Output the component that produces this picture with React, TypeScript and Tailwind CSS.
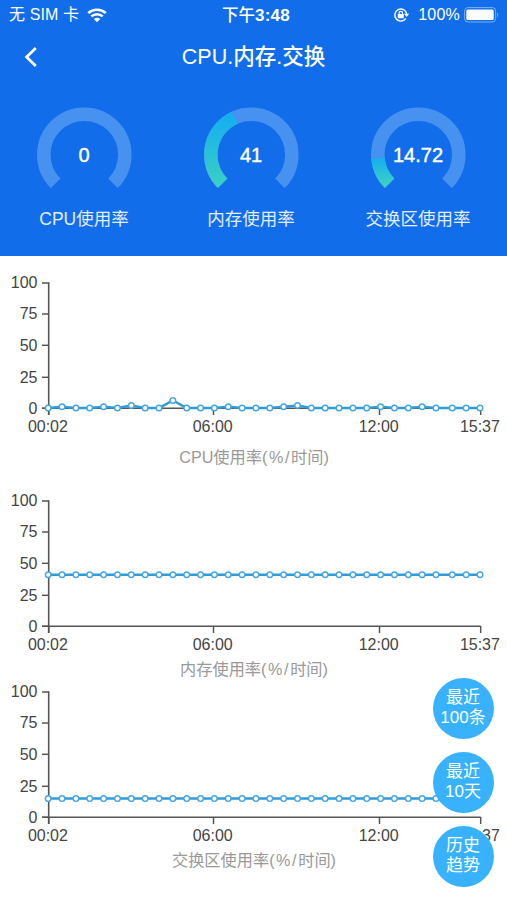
import { ReactNode } from 'react';

type GaugeProps = {
  id: string;
  label: string;
  value: number;
};

type ChartProps = {
  name: string;
  values: number[];
  captionY: number;
  height: number;
};

const POINT_COUNT = 32;

const cpuPeaks: Record<number, number> = { 1: 1, 4: 1, 6: 2, 9: 6, 13: 1, 17: 1, 18: 2, 24: 1, 27: 1 };
const cpuValues = Array.from({ length: POINT_COUNT }, (_, i) => cpuPeaks[i] ?? 0);
const memoryValues = Array.from({ length: POINT_COUNT }, () => 41);
const swapValues = Array.from({ length: POINT_COUNT }, () => 14.72);

const gauges: GaugeProps[] = [
  { id: 'cpu', label: 'CPU使用率', value: 0 },
  { id: 'memory', label: '内存使用率', value: 41 },
  { id: 'swap', label: '交换区使用率', value: 14.72 },
];

const yTicks = [
  { label: '100', y: 10 },
  { label: '75', y: 41 },
  { label: '50', y: 72.3 },
  { label: '25', y: 104.3 },
  { label: '0', y: 135.3 },
];

const xTicks = [
  { label: '00:02', x: 48.7 },
  { label: '06:00', x: 213.5 },
  { label: '12:00', x: 379.5 },
  { label: '15:37', x: 480.7 },
];

const actions = [
  ['最近', '100条'],
  ['最近', '10天'],
  ['历史', '趋势'],
];

// the last three samples come after a short gap
const pointX = (i: number) => (i < 29 ? 48.2 + i * 13.85 : 452.3 + (i - 29) * 13.85);
const pointY = (value: number) => 135 - value * 1.25;

const arcPoint = (ratio: number) => {
  const angle = ((135 + 270 * ratio) * Math.PI) / 180;
  return { x: 48.3 + 40.5 * Math.cos(angle), y: 47.7 + 40.5 * Math.sin(angle) };
};

const arcPath = (ratio: number) => {
  const start = arcPoint(0);
  const end = arcPoint(ratio);
  return `M${start.x} ${start.y}A40.5 40.5 0 ${ratio * 270 > 180 ? 1 : 0} 1 ${end.x} ${end.y}`;
};

const StatusBar = () => (
  <div className="grid h-[30px] grid-cols-[1fr_auto_1fr] items-center pr-[7px] pl-[9px] text-[16px] leading-none">
    <div className="flex items-center">
      <span className="tracking-[0.1px]">无 SIM 卡</span>
      <svg className="ml-[8px]" width="20" height="15" viewBox="0 0 20 15" fill="none">
        <path d="M1.2 5.1C6.1.6 13.9.6 18.8 5.1" stroke="white" strokeWidth="2.6" />
        <path d="M4.3 8.4C7.5 5.4 12.5 5.4 15.7 8.4" stroke="white" strokeWidth="2.5" />
        <path d="M6.8 11C8.6 9.3 11.4 9.3 13.2 11L10 14.3Z" fill="white" />
      </svg>
    </div>
    <span className="ml-[3px] text-[16.5px] font-medium">
      下午<span className="text-[17px] font-bold tracking-[0.3px]">3:48</span>
    </span>
    <div className="flex items-center justify-end">
      <svg width="17" height="16" viewBox="0 0 17 16" fill="none">
        <path d="M12.8 11.4A6 6 0 1 1 13.7 7" stroke="white" strokeWidth="1.4" />
        <path d="M11 6.8H16.2L13.6 10Z" fill="white" />
        <rect x="4.8" y="7" width="6" height="4.3" rx="0.6" fill="white" />
        <path d="M6.1 7.2V6A1.7 1.7 0 0 1 9.5 6V7.2" stroke="white" strokeWidth="1.2" />
      </svg>
      <span className="ml-[8px] tracking-[0.2px]">100%</span>
      <svg className="ml-[4px]" width="36" height="16" viewBox="0 0 36 16" fill="none">
        <rect x="0.6" y="0.6" width="31" height="14.4" rx="3.4" stroke="white" strokeOpacity="0.45" />
        <rect x="2.3" y="2.5" width="27.4" height="10.6" rx="1.6" fill="white" />
        <path d="M33.2 5.2Q35.2 7.8 33.2 10.4Z" fill="white" fillOpacity="0.5" />
      </svg>
    </div>
  </div>
);

const TitleBar = () => (
  <div className="grid h-[54px] grid-cols-[60px_1fr_60px] items-center">
    <button className="pl-[24px]" aria-label="返回">
      <svg width="14" height="20" viewBox="0 0 14 20" fill="none">
        <path d="M11.8 1L2.6 10L11.8 19" stroke="white" strokeWidth="2.8" />
      </svg>
    </button>
    <h1 className="pt-[2px] text-center text-[21.5px] leading-none font-medium">CPU.内存.交换</h1>
  </div>
);

const Gauge = ({ id, label, value }: GaugeProps) => (
  <div className="flex w-[167px] flex-col items-center">
    <svg width="96" height="96" viewBox="0 0 96 96" fill="none">
      <defs>
        <linearGradient id={`gauge-${id}`} x1="0" y1="0" x2="0" y2="1">
          <stop offset="0" stopColor="#16afef" />
          <stop offset="1" stopColor="#38cfc5" />
        </linearGradient>
      </defs>
      <path d={arcPath(1)} stroke="#4791f1" strokeWidth="13.5" />
      {value > 0 && (
        <path d={arcPath(value / 100)} stroke={`url(#gauge-${id})`} strokeWidth="13.5" />
      )}
      <text x="48" y="54.6" textAnchor="middle" fontSize="20" fill="white" stroke="white" strokeWidth="0.4">
        {value}
      </text>
    </svg>
    <span className="mt-[6px] text-[17.5px] leading-[20px] text-[#e3eefd]">{label}</span>
  </div>
);

const LineChart = ({ name, values, captionY, height }: ChartProps) => (
  <svg className="block" width="507" height={height} viewBox={`0 0 507 ${height}`}>
    <path d="M48.7 9.3V142M42 135.3H480.7" stroke="#555" strokeWidth="1.6" fill="none" />
    {yTicks.map(({ label, y }) => (
      <g key={label}>
        <path d={`M42 ${y}H48.7`} stroke="#555" strokeWidth="1.5" />
        <text x="37.5" y={y + 5.2} textAnchor="end" fontSize="16" fill="#444">
          {label}
        </text>
      </g>
    ))}
    {xTicks.map(({ label, x }) => (
      <g key={label}>
        <path d={`M${x} 135V142`} stroke="#555" strokeWidth="1.5" />
        <text x={x - 0.8} y="159.2" textAnchor="middle" fontSize="16" fill="#444">
          {label}
        </text>
      </g>
    ))}
    <polyline
      points={values.map((value, i) => `${pointX(i)},${pointY(value)}`).join(' ')}
      stroke="#2f9bd8"
      strokeWidth="2.5"
      fill="none"
    />
    {values.map((value, i) => (
      <circle key={i} cx={pointX(i)} cy={pointY(value)} r="2.8" fill="white" stroke="#45a5e2" strokeWidth="1.4" />
    ))}
    <text x="254" y={captionY} textAnchor="middle" fontSize="16.2" fill="#999">
      {name}
      <tspan letterSpacing="1.6">(%/</tspan>
      时间)
    </text>
  </svg>
);

const FloatingButton = ({ children }: { children: ReactNode }) => (
  <button className="flex h-[61px] w-[61px] flex-col items-center justify-center rounded-full bg-[#38b2fc] text-[17px] leading-[20px] text-white">
    {children}
  </button>
);

const App = () => {
  return (
    <div className="relative h-[900px] w-[507px] overflow-hidden bg-white font-['Liberation_Sans','Noto_Sans_CJK_SC',sans-serif]">
      <header className="h-[255.5px] bg-[#126dea] text-white">
        <StatusBar />
        <TitleBar />
        <div className="flex justify-center pt-[23px] pr-[5px]">
          {gauges.map((gauge) => (
            <Gauge key={gauge.id} {...gauge} />
          ))}
        </div>
      </header>
      <main className="pt-[17.5px]">
        <LineChart name="CPU使用率" values={cpuValues} captionY={190} height={218} />
        <LineChart name="内存使用率" values={memoryValues} captionY={184} height={191} />
        <LineChart name="交换区使用率" values={swapValues} captionY={184} height={218} />
      </main>
      <div className="absolute top-[677.5px] right-[13.5px] flex flex-col gap-[13px]">
        {actions.map(([first, second]) => (
          <FloatingButton key={second}>
            <span>{first}</span>
            <span>{second}</span>
          </FloatingButton>
        ))}
      </div>
    </div>
  );
};

export default App;
